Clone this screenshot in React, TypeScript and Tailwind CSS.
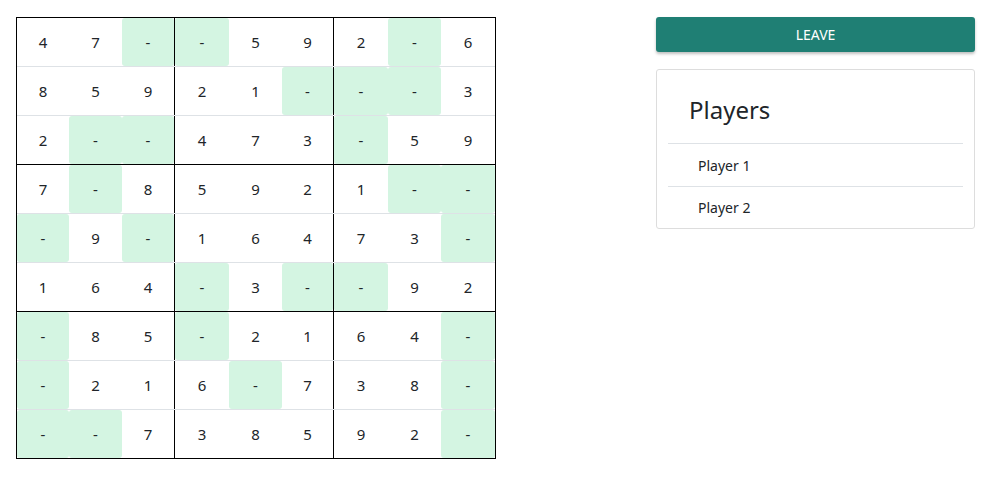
const board = [
  ['4', '7', '-', '-', '5', '9', '2', '-', '6'],
  ['8', '5', '9', '2', '1', '-', '-', '-', '3'],
  ['2', '-', '-', '4', '7', '3', '-', '5', '9'],
  ['7', '-', '8', '5', '9', '2', '1', '-', '-'],
  ['-', '9', '-', '1', '6', '4', '7', '3', '-'],
  ['1', '6', '4', '-', '3', '-', '-', '9', '2'],
  ['-', '8', '5', '-', '2', '1', '6', '4', '-'],
  ['-', '2', '1', '6', '-', '7', '3', '8', '-'],
  ['-', '-', '7', '3', '8', '5', '9', '2', '-'],
];

// cell widths (boundary cells include the 1px black box line)
const widths = ['w-[52px]', 'w-[53px]', 'w-[53px] border-r border-black', 'w-[54px]', 'w-[53px]', 'w-[52px] border-r border-black', 'w-[54px]', 'w-[53px]', 'w-[54px]'];

const rowBorder = (i: number) => {
  if (i === 8) return 'h-[48px]';
  if (i === 2 || i === 5) return 'h-[49px] border-b border-black';
  return 'h-[49px] border-b border-[#dee2e6]';
};

const Board = () => (
  <div className="border border-black w-[480px] text-[15px] text-[#212529]">
    {board.map((row, r) => (
      <div key={r} className={`flex ${rowBorder(r)}`}>
        {row.map((v, c) => (
          <div key={c} className={`flex h-full ${widths[c]}`}>
            <div
              className={`flex flex-1 items-center justify-center rounded-[3px] ${v === '-' ? 'bg-[#d4f5e2]' : ''}`}
            >
              {v}
            </div>
          </div>
        ))}
      </div>
    ))}
  </div>
);

const App = () => {
  const players = ['Player 1', 'Player 2'];

  return (
    <div className="flex items-start min-h-[477px] bg-white pl-[16px] pt-[17px]" style={{ fontFamily: '"Noto Sans", "Open Sans", sans-serif' }}>
      <Board />
      <div className="ml-[160px] w-[319px]">
        <button className="h-[35px] w-full rounded-[3px] bg-[#1f7f74] text-[14px] uppercase text-white shadow-[0_2px_3px_rgba(0,0,0,0.25)]">
          Leave
        </button>
        <div className="mt-[17px] rounded-[3px] border border-[#dddddd] bg-white">
          <h2 className="pl-[32px] pt-[25px] pb-[18px] text-[24px] leading-[30px] text-[#212529]">Players</h2>
          <ul className="mx-[11px]">
            {players.map((p, i) => (
              <li
                key={p}
                className={`flex items-center border-t border-[#dee2e6] pl-[30px] text-[14px] text-[#212529] ${i === 0 ? 'h-[43px]' : 'h-[42px]'}`}
              >
                {p}
              </li>
            ))}
          </ul>
        </div>
      </div>
    </div>
  );
};

export default App;
